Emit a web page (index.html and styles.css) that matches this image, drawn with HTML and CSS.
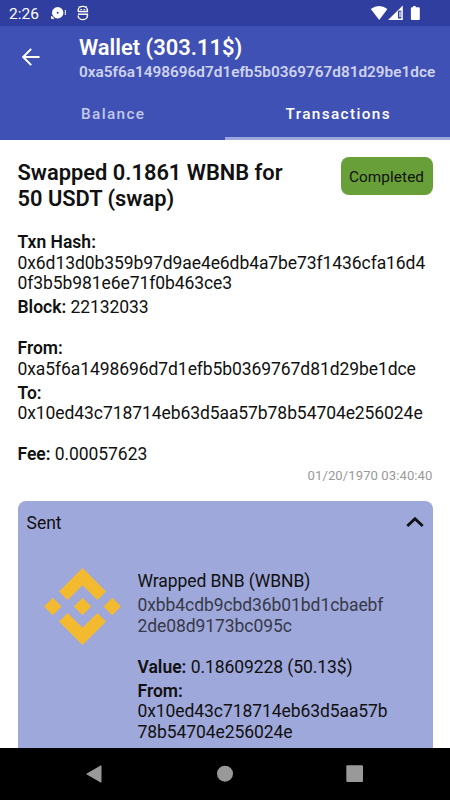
FILE: index.html
```html
<!DOCTYPE html>
<html lang="en">

<head>
    <meta charset="UTF-8">
    <meta name="viewport" content="width=device-width, initial-scale=1.0">
    <title>Wallet - Transactions</title>
    <link rel="stylesheet" href="styles.css">
</head>

<body>
    <div class="screen">
        <div class="status-bar">
            <span class="clock">2:26</span>
            <svg class="status-icon" width="50" height="26" viewBox="0 0 50 26">
                <circle cx="12.7" cy="12.8" r="5.7" fill="#fff"/>
                <circle cx="12.7" cy="12.8" r="1" fill="#303f9f"/>
                <path d="M6.600 16.300l2.200 2.200H6.600zM20.300 10v5" stroke="#fff" stroke-width="1" fill="#fff"/>
                <path d="M33.200 11.500V10a4.600 3.600 0 0 1 9.200 0v1.500H33M33 14.300h9.400v1.700a4.600 3.600 0 0 1-9.200 0v-.5" fill="none" stroke="#fff" stroke-width="1.400"/>
                <path d="M35.400 9.500h1.600M38.600 9.500h1.600M33.700 6.200l1.400 1.400M41.900 6.200l-1.400 1.400" stroke="#fff" stroke-width="1"/>
            </svg>
            <svg class="system-icons" width="52" height="26" viewBox="0 0 52 26">
                <path d="M.8 8.900Q9 3 17.400 8.900L9.200 20z" fill="#fff"/>
                <path d="M18 19.900L32.800 5.600v14.300z" fill="#fff"/>
                <path d="M28 10.700h3.300v7.800H28z" fill="#303f9f"/>
                <path d="M29.400 11.700h1.200v5.300h-1.200z" fill="#fff"/>
                <path d="M43.100 6h2.500v1.300h3.100q1.100 0 1.100 1v10.600q0 1.100-1.100 1.100h-6.700q-1.100 0-1.100-1.100V8.300q0-1 1.100-1h1.100z" fill="#fff"/>
            </svg>
        </div>

        <div class="app-bar">
            <div class="toolbar">
                <svg class="back" width="18" height="18" viewBox="0 0 18 18">
                    <path d="M17.500 9H1.500M9.200 .9L1.200 9l8 8.100" fill="none" stroke="#fff" stroke-width="2"/>
                </svg>
                <div class="heading">
                    <h1>Wallet (303.11$)</h1>
                    <div class="subtitle">0xa5f6a1498696d7d1efb5b0369767d81d29be1dce</div>
                </div>
            </div>
            <div class="tabs">
                <div class="tab">Balance</div>
                <div class="tab active">Transactions</div>
            </div>
        </div>

        <div class="content">
            <div class="summary">
                <h2>Swapped 0.1861 WBNB for 50 USDT (swap)</h2>
                <span class="badge">Completed</span>
            </div>

            <div class="details">
                <p class="row"><b>Txn Hash:</b><br>0x6d13d0b359b97d9ae4e6db4a7be73f1436cfa16d4<br>0f3b5b981e6e71f0b463ce3</p>
                <p class="row"><b>Block:</b> 22132033</p>
                <p class="row spaced"><b>From:</b><br>0xa5f6a1498696d7d1efb5b0369767d81d29be1dce</p>
                <p class="row"><b>To:</b><br>0x10ed43c718714eb63d5aa57b78b54704e256024e</p>
                <p class="row spaced"><b>Fee:</b> 0.00057623</p>
            </div>
            <div class="date">01/20/1970 03:40:40</div>

            <div class="card">
                <div class="card-header">
                    <span>Sent</span>
                    <svg width="18" height="12" viewBox="0 0 18 12">
                        <path d="M1.300 8.900L9 1.700l7.700 7.200" fill="none" stroke="#101116" stroke-width="2.800"/>
                    </svg>
                </div>
                <div class="token">
                    <svg class="token-logo" width="77" height="77" viewBox="0 0 77 77">
                        <g fill="#f3ba2f">
                            <path d="M38.500 0L62 23.500l-8.600 8.500-14.900-14.800L23.600 32 15 23.500z"/>
                            <path d="M38.500 77L62 53.500 53.400 44.900 38.500 59.800 23.600 44.900 15 53.500z"/>
                            <path d="M8.800 29.800l8.700 8.700-8.700 8.700L.1 38.500zM38.500 29.800l8.700 8.700-8.700 8.700-8.700-8.700zM68.200 29.800l8.700 8.700-8.700 8.700-8.700-8.700z"/>
                        </g>
                    </svg>
                    <div class="token-info">
                        <p class="row">Wrapped BNB (WBNB)</p>
                        <p class="row contract">0xbb4cdb9cbd36b01bd1cbaebf<br>2de08d9173bc095c</p>
                        <p class="row spaced"><b>Value:</b> 0.18609228 (50.13$)</p>
                        <p class="row"><b>From:</b><br>0x10ed43c718714eb63d5aa57b<br>78b54704e256024e</p>
                    </div>
                </div>
            </div>
        </div>

        <div class="nav-bar">
            <svg width="18" height="20" viewBox="0 0 18 20"><path d="M.8 10L15 1.800V18.200z" fill="#999" stroke="#999"/></svg>
            <svg width="18" height="20" viewBox="0 0 18 20"><circle cx="9" cy="9.700" r="8" fill="#999"/></svg>
            <svg width="18" height="20" viewBox="0 0 18 20"><rect x=".3" y="1.300" width="16.700" height="16.700" rx="1" fill="#999"/></svg>
        </div>
    </div>
</body>

</html>
```
FILE: styles.css
```css
* {
    margin: 0;
    padding: 0;
    box-sizing: border-box;
}

body {
    font-family: Roboto, sans-serif;
    background: #fff;
    color: #111;
}

svg {
    display: block;
    flex-shrink: 0;
}

.screen {
    width: 450px;
    height: 800px;
    display: flex;
    flex-direction: column;
    overflow: hidden;
}

.status-bar {
    height: 26px;
    flex-shrink: 0;
    display: flex;
    align-items: center;
    padding: 0 28px 0 9px;
    background: #303f9f;
    color: #fff;
}

.clock {
    width: 36px;
    font-size: 15.5px;
    line-height: 26px;
    padding-top: 2px;
}

.system-icons {
    margin-left: auto;
}

.app-bar {
    height: 114px;
    flex-shrink: 0;
    display: flex;
    flex-direction: column;
    background: #3f51b5;
    color: #fff;
}

.toolbar {
    display: flex;
    flex-shrink: 0;
    height: 66px;
    padding: 9px 0 0 22px;
}

.back {
    margin-top: 13px;
    margin-right: 39px;
}

h1 {
    font-size: 21.9px;
    font-weight: 600;
    line-height: 26px;
}

.subtitle {
    font-size: 15.35px;
    font-weight: 600;
    line-height: 18px;
    margin-top: 2px;
    color: #cfd3ed;
}

.tabs {
    flex: 1;
    display: flex;
}

.tab {
    flex: 1;
    padding-left: 1.5px;
    text-align: center;
    font-size: 15.3px;
    font-weight: 500;
    letter-spacing: 1.37px;
    line-height: 45px;
    color: #c3c9e9;
}

.tab.active {
    color: #fff;
    border-bottom: 3px solid #9fa8da;
}

.content {
    flex: 1;
    min-height: 0;
    overflow: hidden;
    padding: 17px 17.5px 0;
}

.summary {
    display: flex;
    justify-content: space-between;
    align-items: flex-start;
    height: 75px;
}

h2 {
    width: 290px;
    padding-top: 3px;
    font-size: 21.85px;
    font-weight: 600;
    line-height: 26px;
}

.badge {
    width: 92px;
    height: 38px;
    border-radius: 8px;
    background: #689f38;
    font-size: 15.3px;
    letter-spacing: 0.1px;
    line-height: 40px;
    text-align: center;
}

.row {
    font-size: 17.5px;
    letter-spacing: -0.08px;
    line-height: 20.5px;
    margin-bottom: 3.5px;
    white-space: nowrap;
}

.row b {
    font-weight: 600;
    letter-spacing: 0;
}

.row.spaced {
    margin-top: 20.5px;
}

.date {
    font-size: 13.1px;
    letter-spacing: 0.08px;
    line-height: 16px;
    margin-bottom: 17px;
    text-align: right;
    color: #999;
}

.card {
    height: 400px;
    border-radius: 8px;
    background: #9fa8da;
}

.card-header {
    display: flex;
    justify-content: space-between;
    align-items: center;
    height: 43px;
    padding: 0 9px;
    font-size: 17.5px;
}

.token {
    display: flex;
    padding: 24px 0 0 26px;
}

.token-logo {
    margin-right: 17px;
}

.token-info {
    padding-top: 3px;
}

.contract {
    color: #363949;
}

.nav-bar {
    height: 52px;
    flex-shrink: 0;
    display: flex;
    justify-content: space-between;
    align-items: center;
    padding: 0 86px;
    background: #000;
}
```
